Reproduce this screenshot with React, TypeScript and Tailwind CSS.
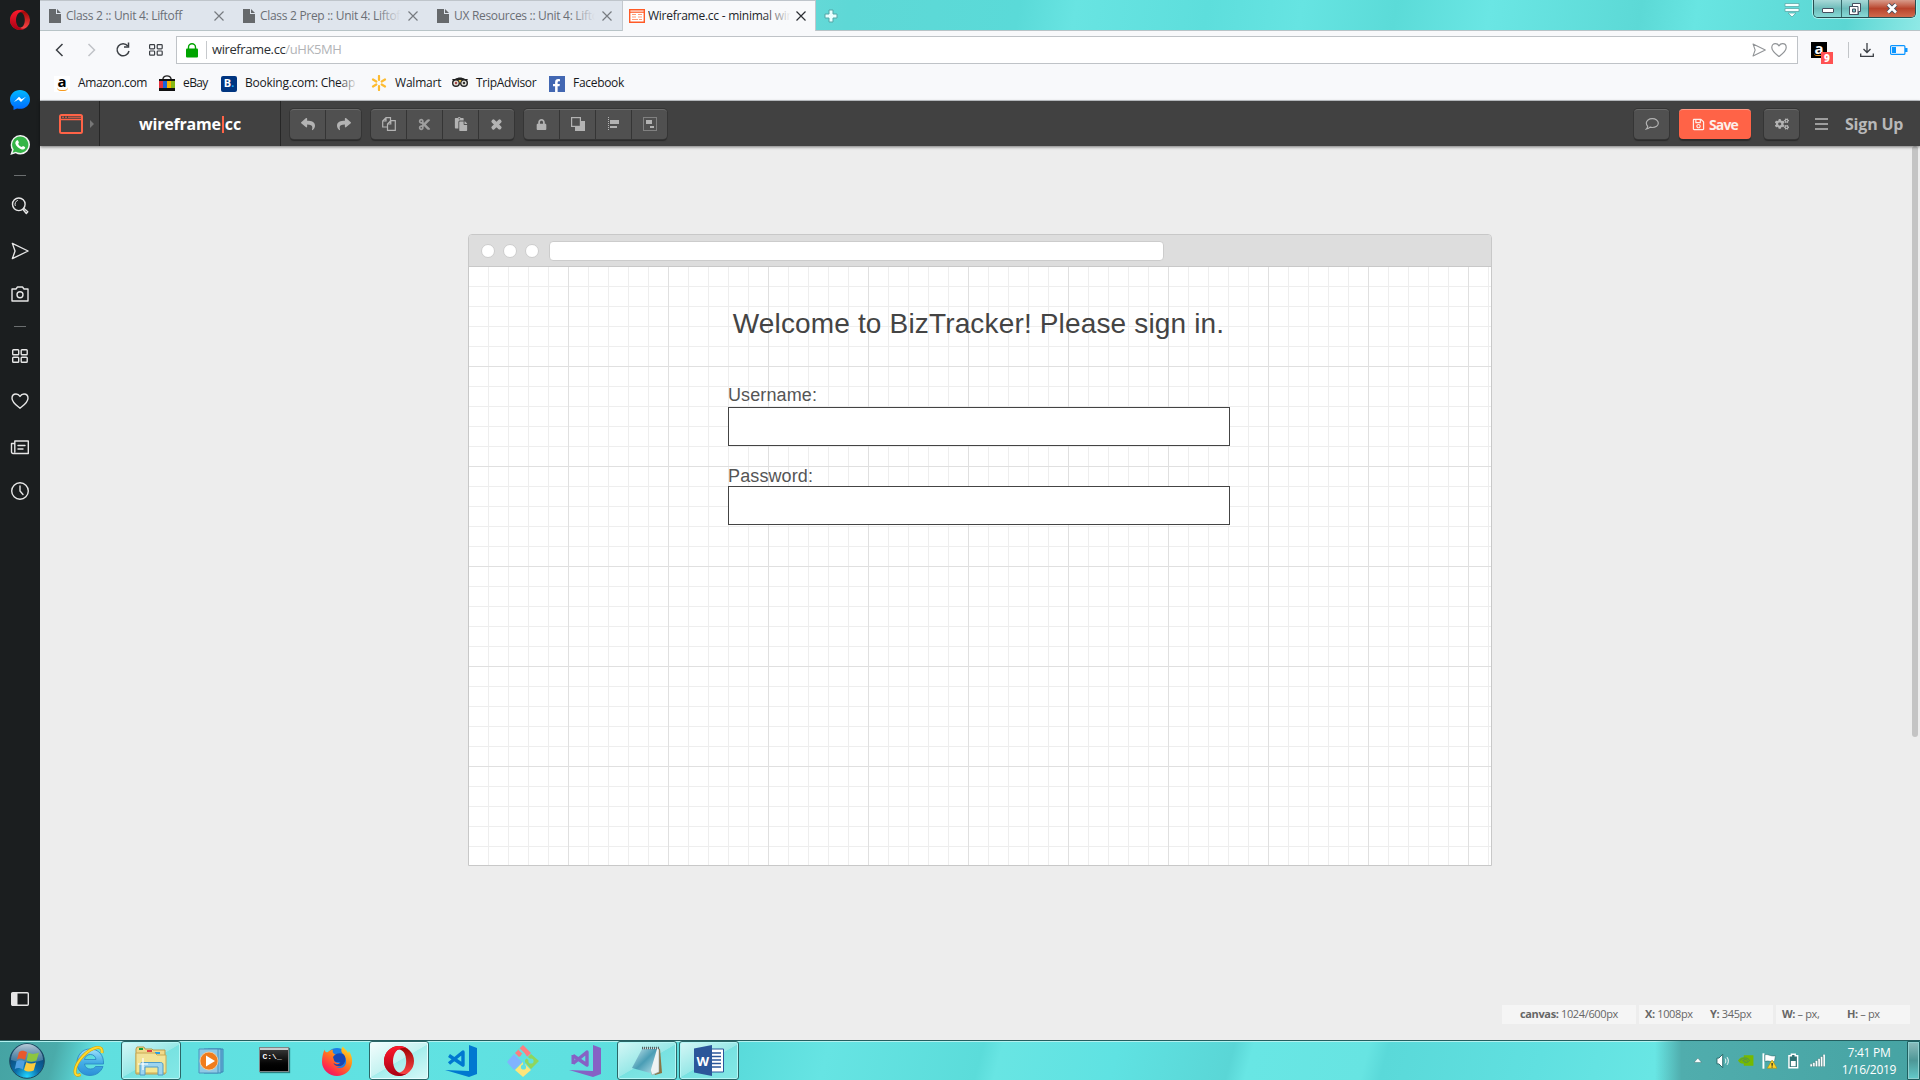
import React from 'react';
import { FaReply, FaShare, FaCut, FaPaste, FaTimes, FaLock, FaRegSave, FaCogs, FaFacebookF } from 'react-icons/fa';

type Kids = { children?: React.ReactNode };

/* ---------- shared line icons ---------- */

const Line = ({ children, s = 20, w = 1.4, c = '' }: Kids & { s?: number; w?: number; c?: string }) => (
  <svg width={s} height={s} viewBox="0 0 20 20" fill="none" stroke="currentColor" strokeWidth={w} strokeLinejoin="round" strokeLinecap="round" className={c}>
    {children}
  </svg>
);

const Heart = () => <path d="M10 17.200C7 14.800 2 11.500 2 7.200 2 4.600 3.800 3 6 3c1.900 0 3.200 1 4 2.400C10.800 4 12.100 3 14 3c2.200 0 4 1.600 4 4.200 0 4.300-5 7.600-8 10z" />;
const Plane = () => <path d="M1.500 1.500l17.500 8.500L1.500 18.500l3-8.500z" />;
const Tiles = () => (
  <>
    <rect x="2.700" y="3.700" width="6" height="5" rx="0.800" />
    <rect x="11.200" y="3.700" width="6" height="5" rx="0.800" />
    <rect x="2.700" y="11.200" width="6" height="5" rx="0.800" />
    <rect x="11.200" y="11.200" width="6" height="5" rx="0.800" />
  </>
);

const OperaMark = ({ size }: { size: number }) => (
  <svg width={size} height={size} viewBox="0 0 30 30">
    <defs>
      <linearGradient id="opA" x1="0" y1="0" x2="0" y2="1">
        <stop offset="0" stopColor="#ff1b2d" />
        <stop offset="1" stopColor="#a70014" />
      </linearGradient>
      <linearGradient id="opB" x1="0" y1="0" x2="0" y2="1">
        <stop offset="0" stopColor="#9c0000" />
        <stop offset="1" stopColor="#ff4b4b" />
      </linearGradient>
    </defs>
    <path fillRule="evenodd" fill="url(#opB)" d="M15 0a15 15 0 1 1 0 30A15 15 0 0 1 15 0zm0 3.500C11 3.500 8.500 8.500 8.500 15S11 26.500 15 26.500c4.200 0 7.200-5 7.200-11.500S19.200 3.500 15 3.500z" />
    <path fill="url(#opA)" d="M15 0a15 15 0 1 0 9.500 26.500c-5 3-10 1-12.500-2-4-5-4-14 0-19C14.500 2.500 20 .500 24.500 3.500A15 15 0 0 0 15 0z" />
  </svg>
);

/* ---------- Opera side bar ---------- */

const Sidebar = () => (
  <aside className="flex w-10 shrink-0 flex-col items-center bg-[#1b1e1f] pr-px text-[#e6e6e6] [&>div]:flex [&>div]:shrink-0 [&>div]:items-center [&>div]:justify-center">
    <div className="ml-px h-[39px]"><OperaMark size={20} /></div>
    <div className="ml-px mt-10 h-[41px]">
      <svg width="20" height="20" viewBox="0 0 20 20">
        <defs>
          <linearGradient id="msg" x1="0" y1="0" x2="0" y2="1"><stop offset="0" stopColor="#00b8ff" /><stop offset="1" stopColor="#0068ff" /></linearGradient>
        </defs>
        <path fill="url(#msg)" d="M10 0c5.600 0 10 4.200 10 9.400s-4.400 9.400-10 9.400c-1 0-2-.100-2.900-.400L3.500 20v-3.500C1.300 14.800 0 12.300 0 9.400 0 4.200 4.400 0 10 0z" />
        <path fill="#fff" d="M4 12l5-5.200 2.600 2.500L16 6.800l-5 5.300-2.500-2.600z" />
      </svg>
    </div>
    <div className="ml-px h-[50px]">
      <svg width="20" height="20" viewBox="0 0 20 20">
        <path fill="#f4f4f4" d="M10.200 0A9.700 9.700 0 0 1 20 9.800a9.700 9.700 0 0 1-9.800 9.700c-1.700 0-3.200-.400-4.500-1.200L.300 20l1.700-5.200a9.700 9.700 0 0 1-1.300-5A9.700 9.700 0 0 1 10.200 0z" />
        <path fill="#35b547" d="M10.200 1.500a8.200 8.200 0 1 1-4.300 15.200L2.600 17.700l1.100-3.200A8.200 8.200 0 0 1 10.200 1.500z" />
        <path fill="#fff" d="M7.200 5.300c.4-.1.800 0 1 .5l.7 1.600c.1.400-.8 1.200-.7 1.500.8 1.500 2 2.500 3.400 3.100.4.100 1.100-1.100 1.500-1l1.800.9c.4.200.2 1.200-.1 1.700-.6.800-1.900 1.200-3 .9-3-.8-5.400-3-6.400-5.700-.4-1.300.5-3.200 1.800-3.500z" />
      </svg>
    </div>
    <div className="h-[11px]"><i className="h-px w-3 bg-[#6b6e6f]" /></div>
    <div className="h-[50px]">
      <Line><circle cx="8.800" cy="8.300" r="6.300" /><path d="M5.200 9.500a3.800 3.800 0 0 1 2.200-5" strokeWidth="1" /><path d="M13 13.500l1-1 3.800 3.300-1.500 1.700z" /></Line>
    </div>
    <div className="h-[40px]"><Line s={18} w={1.5}><Plane /></Line></div>
    <div className="h-[46px]">
      <Line><path d="M2 5h4l1.500-2h5L14 5h4v12H2z" /><circle cx="10" cy="10.800" r="3" /></Line>
    </div>
    <div className="h-[18px]"><i className="h-px w-3 bg-[#6b6e6f]" /></div>
    <div className="h-[42px]"><Line><Tiles /></Line></div>
    <div className="h-[48px]"><Line><Heart /></Line></div>
    <div className="h-[44px]">
      <Line><path d="M4.800 4h13.500v12.500H3a1.500 1.500 0 0 1-1.500-1.500V6.500h3.300zM4.800 6.500V15M8 8.500h7M8 12h5" /></Line>
    </div>
    <div className="h-[44px]"><Line><circle cx="10" cy="10" r="8.300" /><path d="M10 5v5l3 3.500" /></Line></div>
    <div className="mt-auto h-[82px]">
      <svg width="20" height="16" viewBox="0 0 20 16"><rect x="1.700" y="1.700" width="16.600" height="12.600" rx="1" fill="none" stroke="#e6e6e6" strokeWidth="1.400" /><path fill="#e6e6e6" d="M2 2h5.500v12H2z" /></svg>
    </div>
  </aside>
);

/* ---------- tab strip ---------- */

const PageIcon = () => (
  <svg width="12" height="14" viewBox="0 0 12 14" className="shrink-0"><path fill="#66696c" d="M0 0h7v5h5v9H0z" /><path fill="#66696c" d="M8 0l4 4H8z" /></svg>
);

const CloseX = ({ c }: { c: string }) => (
  <svg width="10" height="10" viewBox="0 0 10 10" className={c}><path d="M.500 .500l9 9m0-9l-9 9" stroke="currentColor" strokeWidth="1.200" /></svg>
);

const Tab = ({ title, fade, last }: { title: string; fade?: boolean; last?: boolean }) => (
  <div className="flex h-full w-[194px] items-center bg-[#dfe5ed] pl-[9px]">
    <PageIcon />
    <div className="relative ml-[5px] w-[141px] overflow-hidden whitespace-nowrap text-[12px] tracking-[-0.3px] text-[#6b6f75]">
      {title}
      {fade && <i className="absolute inset-y-0 right-0 w-6 bg-linear-to-r from-[#dfe5ed]/0 to-[#dfe5ed]" />}
    </div>
    <span className="ml-[7px]"><CloseX c="text-[#777b80]" /></span>
    {!last && <i className="ml-auto mr-[-1px] h-4 w-px bg-[#b4b9bf]" />}
  </div>
);

const WindowButtons = () => (
  <div className="mr-[4px] flex h-[18px] self-start overflow-hidden rounded-b-[5px] border border-t-0 border-[#274e50] shadow-[0_0_0_1px_#a9f0ee]">
    <div className="flex w-[28px] items-center justify-center border-r border-[#35696a] bg-linear-to-b from-[#a8d9d8] via-[#6dbcba] to-[#87d9d6]">
      <i className="mt-1 h-[5px] w-3 rounded-[1px] border border-[#454f5f] bg-white" />
    </div>
    <div className="flex w-[27px] items-center justify-center border-r border-[#35696a] bg-linear-to-b from-[#a8d9d8] via-[#6dbcba] to-[#87d9d6]">
      <svg width="12" height="12" viewBox="0 0 12 12"><path d="M3.500 .500h8v8h-2v3h-9v-8h3z" fill="#fff" stroke="#454f5f" /><path d="M.500 3.500h8.500v8H.500z" fill="#fff" stroke="#454f5f" /><path d="M3.500 6h3v3h-3z" fill="#7cc" stroke="#454f5f" /></svg>
    </div>
    <div className="flex w-[46px] items-center justify-center bg-linear-to-b from-[#d89b8b] via-[#b8432c] to-[#d06a4c]">
      <svg width="12" height="11" viewBox="0 0 12 11"><path d="M2 1.500L10 9.500M10 1.500L2 9.500" stroke="#454f5f" strokeWidth="4.400" /><path d="M2 1.500L10 9.500M10 1.500L2 9.500" stroke="#fff" strokeWidth="2.600" /></svg>
    </div>
  </div>
);

const TabStrip = () => (
  <div className="flex h-[31px] items-stretch border-b border-[#b8c4c7] bg-[linear-gradient(100deg,#dfe5ed_0%,#5ed8d6_43%,#5adad8_52%,#68e4e2_55%,#5ddedc_62%,#66e4e2_67%,#5bdbd8_72%,#6ae6e4_77%,#5cd9d6_85%,#68e5e2_88%,#5bd6d3_96%,#8fe9e6_100%)]">
    <div className="flex h-[30px] border-t border-[#bfc5cb]">
      <Tab title="Class 2 :: Unit 4: Liftoff" />
      <Tab title="Class 2 Prep :: Unit 4: Liftoff" fade />
      <Tab title="UX Resources :: Unit 4: Liftoff" fade last />
      <div className="z-10 flex h-[30px] w-[194px] items-center border-x border-[#c3c8cd] bg-[#f8f9fb] pb-px pl-[6px]">
        <svg width="16" height="14" viewBox="0 0 16 14" className="shrink-0"><path d="M.700 .700h14.600v12.600H.700z" fill="#fff" stroke="#ff5a26" strokeWidth="1.400" /><path d="M1 3.200h14" stroke="#ff5a26" strokeWidth="1.200" /><path d="M3 5.500h4M9 5.500h4M3 8h4M9 8h4M3 10.500h6M10 10.500h3" stroke="#ff9c78" /></svg>
        <div className="relative ml-[3px] w-[143px] overflow-hidden whitespace-nowrap text-[12px] tracking-[-0.25px] text-[#22252a]">
          Wireframe.cc - minimal wireframing
          <i className="absolute inset-y-0 right-0 w-7 bg-linear-to-r from-[#f8f9fb]/0 to-[#f8f9fb]" />
        </div>
        <span className="ml-[5px]"><CloseX c="text-[#2b2e33]" /></span>
      </div>
    </div>
    <svg width="14" height="14" viewBox="0 0 14 14" className="ml-[8px] mt-[9px]"><path d="M5 1h4v4h4v4H9v4H5V9H1V5h4z" fill="#e8ffff" stroke="#54a5a6" /></svg>
    <div className="ml-auto flex">
      <svg width="16" height="15" viewBox="0 0 16 15" className="mr-[13px] mt-[3px]"><path d="M1 .500h14v3H1zM1 5.500h14v3H1zM4 10h8l-4 4z" fill="#f2ffff" stroke="#5ba9a9" strokeWidth=".8" /></svg>
      <WindowButtons />
    </div>
  </div>
);

/* ---------- address bar ---------- */

const AddressBar = () => (
  <div className="flex h-[38px] items-center bg-[#f8f9fb] text-[#3b3f44]">
    <div className="flex w-[136px] items-center">
      <svg width="9" height="14" viewBox="0 0 9 14" className="ml-[15px]"><path d="M7.500 1L1.500 7l6 6" fill="none" stroke="currentColor" strokeWidth="1.500" /></svg>
      <svg width="9" height="14" viewBox="0 0 9 14" className="ml-[23px]"><path d="M1.500 1l6 6-6 6" fill="none" stroke="#c0c3c7" strokeWidth="1.500" /></svg>
      <svg width="16" height="16" viewBox="0 0 16 16" className="ml-[19px]"><path d="M12.800 4A6 6 0 1 0 14 9" fill="none" stroke="currentColor" strokeWidth="1.500" /><path d="M13.500 .500v4.500H9" fill="none" stroke="currentColor" strokeWidth="1.500" /></svg>
      <svg width="14" height="12" viewBox="0 0 14 12" className="ml-[18px]" fill="none" stroke="currentColor" strokeWidth="1.200"><rect x=".6" y=".6" width="5" height="4.200" rx=".8" /><rect x="8.200" y=".6" width="5" height="4.200" rx=".8" /><rect x=".6" y="7" width="5" height="4.200" rx=".8" /><rect x="8.200" y="7" width="5" height="4.200" rx=".8" /></svg>
    </div>
    <div className="flex h-7 w-[1622px] items-center border border-[#bfc3c7] bg-white">
      <svg width="12" height="15" viewBox="0 0 12 15" className="ml-[9px]"><path d="M2.500 7V4.200a3.500 3.500 0 0 1 7 0V7" fill="none" stroke="#00a400" strokeWidth="1.400" /><rect x="0" y="5.500" width="12" height="9" rx="1" fill="#00a400" /></svg>
      <i className="ml-[8px] h-[18px] w-px bg-[#c6c9cc]" />
      <span className="ml-[5px] text-[13px] tracking-[-0.4px] text-[#2c2f33]">wireframe.cc<span className="text-[#b2b4b7]">/uHK5MH</span></span>
      <span className="ml-auto flex items-center gap-[4px] pr-[9px] text-[#909396]">
        <Line s={14} w={1.5}><Plane /></Line>
        <Line s={18} w={1.3}><Heart /></Line>
      </span>
    </div>
    <div className="relative ml-[13px] flex size-4 items-center justify-center bg-black text-[15px] font-bold leading-none text-white">
      <span className="-mt-1">a</span>
      <i className="absolute bottom-[2px] left-[3px] h-[3px] w-[9px] rounded-b-full border-b border-[#f79a1c]" />
      <b className="absolute left-[10px] top-[10px] flex size-3 items-center justify-center bg-[#ff5252] text-[10px]">9</b>
    </div>
    <i className="ml-[21px] h-4 w-px bg-[#c2c5c8]" />
    <svg width="14" height="14" viewBox="0 0 14 14" className="ml-[11px]" fill="none" stroke="currentColor" strokeWidth="1.300"><path d="M7 0v9M3.500 6L7 9.500 10.500 6M.700 10.500v2.800h12.600v-2.800" /></svg>
    <svg width="18" height="10" viewBox="0 0 18 10" className="ml-[16px]"><rect x=".6" y=".6" width="14.300" height="8.800" rx="1" fill="none" stroke="#0a95ff" strokeWidth="1.200" /><path d="M2 2h4v6H2zM15 3h2.500v4H15z" fill="#0a95ff" /></svg>
  </div>
);

const Bookmarks = () => (
  <div className="flex h-[32px] items-center border-b border-[#c5c9cd] bg-[#f8f9fb] pb-[3px] text-[12px] text-[#17191c]">
    <span className="relative ml-[14px] mt-px flex size-4 items-center justify-center bg-white text-[15px] font-bold leading-none text-black">
      <span className="-mt-[5px]">a</span>
      <i className="absolute bottom-[1px] left-[3px] h-[4px] w-[11px] rounded-b-full border-b-[1.500px] border-[#f79a1c]" />
    </span>
    <span className="ml-2 w-[69px] whitespace-nowrap tracking-[-0.38px]">Amazon.com</span>
    <svg width="16" height="16" viewBox="0 0 16 16" className="ml-[12px]"><path d="M4 6V3.500C5 0 11 0 12 3.500V6" fill="none" stroke="#222" strokeWidth="1.300" /><path fill="#111" d="M0 4h16v12H0z" /><path fill="#e5323d" d="M0 6h4v7H0z" /><path fill="#1a63d8" d="M4 6h4v7H4z" /><path fill="#f5b400" d="M8 6h4v7H8z" /><path fill="#86b817" d="M12 6h4v7h-4z" /></svg>
    <span className="ml-2 w-[25px] whitespace-nowrap tracking-[-0.6px]">eBay</span>
    <span className="ml-[13px] mt-px flex size-4 items-center justify-center rounded-[2px] bg-[#003580] text-[11px] font-bold text-white">B<span className="text-[#1fb0f5]">.</span></span>
    <span className="relative ml-2 w-[113px] overflow-hidden whitespace-nowrap tracking-[-0.25px]">Booking.com: Cheap H<i className="absolute inset-y-0 right-0 w-4 bg-linear-to-r from-[#f8f9fb]/20 to-[#f8f9fb]" /></span>
    <svg width="16" height="16" viewBox="0 0 16 16" className="ml-[13px]" stroke="#fdbb30" strokeWidth="2.200" strokeLinecap="round"><path d="M8 1v4M8 11v4M2 4.500l3.300 2M10.700 9.500l3.300 2M2 11.500l3.300-2M10.700 6.500l3.300-2" /></svg>
    <span className="ml-2 w-[45px] whitespace-nowrap tracking-[-0.2px]">Walmart</span>
    <svg width="16" height="12" viewBox="0 0 16 12" className="ml-[12px]"><path d="M0 2h3c3-2 7-2 10 0h3l-2 3H2z" fill="#222" /><circle cx="4" cy="6" r="4" fill="#222" /><circle cx="12" cy="6" r="4" fill="#222" /><circle cx="4" cy="6" r="2.600" fill="#e3e2da" /><circle cx="12" cy="6" r="2.600" fill="#e3e2da" /><circle cx="4" cy="6" r="1.200" fill="#a44" /><circle cx="12" cy="6" r="1.200" fill="#333" /><path d="M6.500 3h3L8 6z" fill="#f0c24b" /></svg>
    <span className="ml-2 w-[61px] whitespace-nowrap tracking-[-0.3px]">TripAdvisor</span>
    <span className="ml-[12px] mt-px flex size-4 items-end justify-end overflow-hidden bg-[#4267b2] pr-[2px] text-white"><FaFacebookF size={13} /></span>
    <span className="ml-2 whitespace-nowrap tracking-[-0.3px]">Facebook</span>
  </div>
);

/* ---------- wireframe.cc tool bar ---------- */

const Group = ({ children }: Kids) => (
  <div className="flex h-[30px] divide-x divide-[#353535] rounded-[4px] border-t border-[#6a6a6a] bg-[#505050] text-[#b3b3b3] shadow-[0_0_0_1px_#353535,0_2px_1px_#2b2b2b] [&>span]:flex [&>span]:w-9 [&>span]:items-center [&>span]:justify-center [&>span:last-child]:w-[35px]">
    {children}
  </div>
);

const Toolbar = () => (
  <div className="z-10 flex h-[45px] items-center bg-[#414141] shadow-[0_1px_3px_rgba(0,0,0,0.5)]">
    <div className="flex h-full w-[60px] items-center border-r border-[#262626] pl-[19px]">
      <svg width="24" height="20" viewBox="0 0 24 20" fill="none" stroke="#ff6347" strokeWidth="2"><rect x="1" y="1" width="22" height="18" rx="1.500" /><path d="M1 5.500h22" strokeWidth="1.500" /><path d="M3 3.200h2M6 3.200h2M9 3.200h14" strokeWidth="1" /></svg>
      <svg width="5" height="8" viewBox="0 0 5 8" className="ml-[7px]"><path d="M0 0l4 4-4 4z" fill="#777" /></svg>
    </div>
    <div className="flex h-full w-[181px] items-center justify-center border-r border-[#262626] text-[16px] font-bold tracking-[-0.2px] text-white">
      wireframe<span className="mx-[1px] mt-[2px] h-[17px] w-[2px] bg-[#ff6347]" />cc
    </div>
    <div className="ml-[9px] flex gap-[10px]">
      <Group>
        <span><FaReply size={14} /></span>
        <span><FaShare size={14} /></span>
      </Group>
      <Group>
        <span>
          <svg width="14" height="14" viewBox="0 0 14 14" fill="#505050" stroke="currentColor" strokeWidth="1.200"><path d="M4 .700h4.500V10H.700V4zM4 .700V4H.700" /><path d="M8.800 3.700h4.500v9.600H5.500V7zM8.800 3.700V7H5.500" /></svg>
        </span>
        <span><FaCut size={13} className="opacity-80" /></span>
        <span><FaPaste size={14} /></span>
        <span><FaTimes size={13} strokeWidth="50" stroke="currentColor" /></span>
      </Group>
      <Group>
        <span><FaLock size={11} /></span>
        <span>
          <svg width="14" height="14" viewBox="0 0 14 14"><path fill="currentColor" d="M4 10h6V4h4v10H4z" /><rect x=".6" y=".6" width="8.800" height="8.800" fill="#505050" stroke="currentColor" strokeWidth="1.200" /></svg>
        </span>
        <span>
          <svg width="12" height="14" viewBox="0 0 12 14"><path d="M.500 0v14" stroke="currentColor" strokeDasharray="1 1" /><path fill="currentColor" d="M2 3h9v4H2zM2 9h7v2H2z" /></svg>
        </span>
        <span>
          <svg width="14" height="14" viewBox="0 0 14 14"><rect x=".5" y=".5" width="13" height="13" fill="none" stroke="currentColor" strokeDasharray="1 1" /><path fill="currentColor" d="M3 3h6v4H3zM7 9h4v2H7z" /></svg>
        </span>
      </Group>
    </div>
    <div className="ml-auto flex items-center">
      <Group>
        <span>
          <svg width="14" height="12" viewBox="0 0 14 12" fill="none" stroke="currentColor" strokeWidth="1.200"><path d="M7.300.7c3.400 0 6 1.900 6 4.400s-2.600 4.400-6 4.400c-.8 0-1.500-.1-2.200-.3-.9.9-2 1.500-3.600 1.800.7-.8 1.100-1.600 1.200-2.800C1.800 7.400 1.300 6.300 1.300 5.100c0-2.500 2.600-4.400 6-4.400z" /></svg>
        </span>
      </Group>
      <div className="ml-[10px] flex h-[30px] w-[72px] items-center justify-center gap-[4px] rounded-[4px] border-t border-[#ff9a87] bg-[#ff6347] text-[14px] font-bold tracking-[-0.8px] text-[#fdeeea] shadow-[0_2px_1px_#2b2b2b]">
        <FaRegSave size={13} />Save
      </div>
      <div className="ml-[13px]"><Group><span><FaCogs size={14} /></span></Group></div>
      <div className="ml-4 flex w-[13px] flex-col gap-[2px]"><i className="h-[2px] bg-[#9d9d9d]" /><i className="mt-px h-[2px] bg-[#9d9d9d]" /><i className="mt-px h-[2px] bg-[#9d9d9d]" /></div>
      <span className="ml-[17px] w-[75px] whitespace-nowrap text-[16px] font-bold tracking-[-0.2px] text-[#b8b8b8]">Sign Up</span>
    </div>
  </div>
);

/* ---------- drawing canvas ---------- */

const Field = ({ label, drop }: { label: string; drop?: boolean }) => (
  <label className="flex flex-col">
    <span className={drop ? "flex h-[20px] items-center pt-[3px] font-['Liberation_Sans',sans-serif] text-[18px] leading-none tracking-[0.12px] text-[#555]" : "flex h-[20px] items-center font-['Liberation_Sans',sans-serif] text-[18px] leading-none tracking-[0.12px] text-[#555]"}>{label}</span>
    <span className="mt-[2px] h-[39px] w-[502px] border border-[#444] bg-white" />
  </label>
);

const Canvas = () => (
  <div className="flex h-[632px] w-[1024px] flex-col overflow-hidden rounded-t-[4px] border border-[#c8c8c8]">
    <div className="flex h-[32px] shrink-0 items-center border-b border-[#c8c8c8] bg-[#ddd] pl-[12px]">
      <div className="flex gap-[8px]">
        <i className="size-[14px] rounded-full border border-[#ccc] bg-white" />
        <i className="size-[14px] rounded-full border border-[#ccc] bg-white" />
        <i className="size-[14px] rounded-full border border-[#ccc] bg-white" />
      </div>
      <i className="ml-[10px] h-[20px] w-[615px] rounded-[4px] border border-[#ccc] bg-white" />
    </div>
    <div className="flex grow flex-col items-center bg-white bg-[linear-gradient(to_right,transparent_99px,#e0e0e0_99px),linear-gradient(to_bottom,transparent_99px,#e0e0e0_99px),linear-gradient(to_right,transparent_19px,#eee_19px),linear-gradient(to_bottom,transparent_19px,#eee_19px)] bg-[size:100px_100px,100px_100px,20px_20px,20px_20px] pt-[41px]">
      <h1 className="ml-[-3px] h-[32px] whitespace-nowrap font-['Liberation_Sans',sans-serif] text-[28px] leading-[32px] tracking-[0.16px] text-[#444]">Welcome to BizTracker! Please sign in.</h1>
      <div className="ml-[-2px] mt-[45px] flex flex-col gap-[18px]">
        <Field label="Username:" />
        <Field label="Password:" drop />
      </div>
    </div>
  </div>
);

const Status = () => (
  <div className="flex gap-[3px] text-[11px] tracking-[-0.36px] text-[#666] [&>div]:flex [&>div]:h-[19px] [&>div]:w-[134px] [&>div]:items-center [&>div]:whitespace-pre [&>div]:bg-[#f5f5f5]">
    <div className="pl-[18px]"><b>canvas:</b> 1024/600px</div>
    <div className="pl-[6px]"><span className="w-[65px]"><b>X:</b> 1008px</span><span><b>Y:</b> 345px</span></div>
    <div className="pl-[6px]"><span className="w-[65px]"><b>W:</b> – px,</span><span><b>H:</b> – px</span></div>
  </div>
);

/* ---------- Windows task bar ---------- */

const Slot = ({ children, open, bright }: Kids & { open?: boolean; bright?: boolean }) => (
  <div className="flex w-[62px] shrink-0 items-center justify-center">
    {open ? (
      <div className={bright
        ? 'flex h-[39px] w-[60px] items-center justify-center rounded-[3px] border border-[#2b6667] bg-[linear-gradient(150deg,#f4fdfd,#c4f3f1_50%,#a5eeec_51%,#d8f9f8)] shadow-[inset_0_0_0_1px_#e8ffff]'
        : 'flex h-[39px] w-[60px] items-center justify-center rounded-[3px] border border-[#2b6667] bg-[linear-gradient(150deg,#d5f7f6,#98e8e7_50%,#78e2e1_51%,#84e8e6)] shadow-[inset_0_0_0_1px_#b5f7f6]'}>
        {children}
      </div>
    ) : children}
  </div>
);

const StartOrb = () => (
  <svg width="36" height="36" viewBox="0 0 36 36">
    <defs>
      <radialGradient id="orb" cx=".5" cy=".95" r=".9"><stop offset="0" stopColor="#22d6ff" /><stop offset=".4" stopColor="#0b6ca8" /><stop offset="1" stopColor="#0b3a63" /></radialGradient>
      <linearGradient id="orbTop" x1="0" y1="0" x2="0" y2="1"><stop offset="0" stopColor="#d5e6ee" stopOpacity=".85" /><stop offset="1" stopColor="#8fb4c8" stopOpacity=".35" /></linearGradient>
    </defs>
    <circle cx="18" cy="18" r="17.300" fill="url(#orb)" stroke="#1d4960" />
    <path d="M2 17a16 16 0 0 1 32 0c-9 3-22 3-32 0z" fill="url(#orbTop)" />
    <path d="M10 9c3-2 5-1.500 8 .2l-2 7.800c-3-1.800-5.500-2-8-.5z" fill="#e8582c" />
    <path d="M19.500 9.800c3 1.600 6 1.600 10.500-.3l-2.500 8c-3.500 1.500-6.500 1.500-10 0z" fill="#8cc63f" />
    <path d="M7.500 18.200c3-1.600 5.500-1.300 8.300.3l-2 8c-3-2-5.500-2-8-.5z" fill="#4e9fe0" />
    <path d="M17.200 19.200c3 1.600 6.500 1.600 9.800.2l-2.300 8c-3.500 1.600-6.500 1.400-9.700-.5z" fill="#fccb3d" />
  </svg>
);

const IeIcon = () => (
  <svg width="32" height="32" viewBox="0 0 32 32">
    <defs><linearGradient id="ie" x1="0" y1="0" x2="0" y2="1"><stop offset="0" stopColor="#9fe2fb" /><stop offset=".5" stopColor="#45aee6" /><stop offset="1" stopColor="#2b8fd8" /></linearGradient></defs>
    <path fillRule="evenodd" d="M30.500 19H11.500c.5 3.500 3 5 6 5 2.500 0 4-.8 5-2.500h7.500C28 27 23 30.500 17 30.500c-8 0-13-5.500-13-13S9.500 4 17 4c8.500 0 14 6 13.500 15zM11.500 14.500h11.500c-.3-3-2.500-5-5.700-5s-5.300 2-5.800 5z" fill="url(#ie)" stroke="#2783c4" strokeWidth=".8" />
    <path d="M29 8c.5-4-1-6-5-5.500C15 4 3 16 2 26c-.3 4 2 5 5.500 3.500" fill="none" stroke="#d7a400" strokeWidth="3" />
    <path d="M29 8c.5-4-1-6-5-5.500C15 4 3 16 2 26c-.3 4 2 5 5.500 3.500" fill="none" stroke="#ffd92e" strokeWidth="1.900" />
  </svg>
);

const FolderIcon = () => (
  <svg width="32" height="30" viewBox="0 0 32 30" className="mt-px">
    <defs><linearGradient id="fold" x1="0" y1="0" x2="0" y2="1"><stop offset="0" stopColor="#f0e19a" /><stop offset="1" stopColor="#f7e88f" /></linearGradient></defs>
    <path d="M1 3l1-2h7l1 2h7l1 1h12v24H1z" fill="#f0d98a" stroke="#b99b4a" />
    <path d="M4 2h4v2H4z" fill="#14a038" /><path d="M12 4h5v2h-5z" fill="#d44" /><path d="M20 6h5v2h-5z" fill="#28a0e8" />
    <path d="M1 7h19l2 2h9v18H1z" fill="url(#fold)" stroke="#c9ab55" />
    <path d="M5 29V19c0-2 1-2.500 2.500-2.500h18c1.500 0 2.500.5 2.500 2.500v10h-5v-8H10v8z" fill="#9dd4ef" stroke="#4f9cc8" />
    <path d="M8 12v12M3 18h10" stroke="#fff" strokeWidth="1.200" />
  </svg>
);

const MediaIcon = () => (
  <svg width="30" height="26" viewBox="0 0 30 26" className="mt-px">
    <path d="M10 1h15v23H10z" fill="#6db5dc" stroke="#3a86b5" /><path d="M6 1h17v24H6z" fill="#82c2e4" stroke="#3a86b5" /><path d="M1 1h19v24H1z" fill="#8ec9e6" stroke="#4a93bd" />
    <circle cx="11" cy="13" r="9" fill="#f07c1c" stroke="#fbd0a0" strokeWidth=".8" /><path d="M8 7.500l9 5.500-9 5.500z" fill="#fff" />
  </svg>
);

const CmdIcon = () => (
  <div className="mr-[3px] mt-[-2px] flex h-[25px] w-[30px] flex-col border border-[#7d8587] bg-linear-to-b from-[#3d3d3d] to-black shadow-[1px_1px_1px_#2a8080]">
    <i className="h-[2px] shrink-0 bg-[#c8cccd]" />
    <span className="mt-[2px] whitespace-nowrap pl-[3px] font-['Liberation_Mono',monospace] text-[8px] font-bold leading-[10px] text-white">C:\_</span>
  </div>
);

const FirefoxIcon = () => (
  <svg width="32" height="32" viewBox="0 0 32 32">
    <defs>
      <linearGradient id="ffx" x1=".9" y1="0" x2=".2" y2="1"><stop offset="0" stopColor="#ffe226" /><stop offset=".45" stopColor="#ff7d1c" /><stop offset=".8" stopColor="#ff2d4a" /><stop offset="1" stopColor="#e3146f" /></linearGradient>
    </defs>
    <circle cx="16" cy="14" r="11" fill="#1a7fe8" />
    <path d="M3.500 4.500C4 7 5 7.500 7 7c1.500-1.500 3-2 5-2.500-1 2 0 4 2 5l3 .5c-.5 2-3 2-3.500 3.500-1 2 1 5 5 4.500 3-.5 3-1.500 5-.5-2 4-5 5-8.500 4.500 6 3 11-1 10-7-.5-3-2-5-3-6-2-2-2.500-5 0-7.500C23 4 26 5 27 8l1-2c2.500 4 3.500 8 3 12-1 8-7.500 13-15 13S1 25 1 17C1 12 2 8 3.500 4.500z" fill="url(#ffx)" />
    <path d="M12 12c2-3 6-5 10-3 4 3 3 10-2 12-4 1-7-1-7.500-3 3 2 5 1.500 7-.5-3-.5-6 0-6.500-2.500z" fill="#1747b5" />
  </svg>
);

const StudioIcon = ({ color }: { color: string }) => (
  <svg width="32" height="32" viewBox="0 0 32 32"><path fill={color} d="M24 0l8 3v26l-8 3L0 25l24 1z" /><path fill="none" stroke={color} strokeWidth="3.400" strokeLinejoin="round" d="M4 10.500L18 20V7L4 18.500" />{color === '#8661c5' && <path d="M4 10v9" stroke={color} strokeWidth="3" />}</svg>
);

const GitIcon = () => (
  <svg width="34" height="34" viewBox="0 0 34 34">
    <path fill="#fc7e80" d="M17 1l8 8-4 4-4-3-4 3-4-4z" /><path fill="#80b3ff" d="M8 10l8 8-8 8-7-8z" /><path fill="#8fd65c" d="M25 10l8 7-8 8-7-8z" /><path fill="#fde57a" d="M17 18l8 8-8 7-8-7z" />
    <path d="M13 5l5 5v12M18 11l7 6" stroke="#60e0e0" strokeWidth="2" fill="none" /><circle cx="17.500" cy="12" r="2.600" fill="#60e0e0" /><circle cx="25" cy="17" r="2.600" fill="#60e0e0" /><circle cx="17.500" cy="23" r="2.600" fill="#60e0e0" />
  </svg>
);

const NotepadIcon = () => (
  <svg width="32" height="30" viewBox="0 0 32 30">
    <defs><linearGradient id="note" x1="0" y1="0" x2="1" y2="1"><stop offset="0" stopColor="#c5e6ec" /><stop offset=".5" stopColor="#4a9db5" /><stop offset="1" stopColor="#b9e3ec" /></linearGradient></defs>
    <path d="M11 3h18l2 24-7 2z" fill="#8b7442" /><path d="M12 2h16v24l-7 3z" fill="#eef3f3" stroke="#9aa" strokeWidth=".6" /><path d="M11 3h15l-7 24L1 22z" fill="url(#note)" /><path d="M11 2h17" stroke="#566" strokeWidth="2.500" strokeDasharray="1 1" />
  </svg>
);

const WordIcon = () => (
  <svg width="31" height="31" viewBox="0 0 31 31">
    <path d="M16 4h13.500v23H16z" fill="#fff" stroke="#2b579a" /><path d="M18 8h9M18 11.500h9M18 15h9M18 18.500h9M18 22h9" stroke="#2b579a" strokeWidth="1.400" /><path d="M0 3.500L18 0v31L0 27.500z" fill="#2b579a" />
    <text x="8.800" y="20.500" textAnchor="middle" fontFamily="Open Sans, sans-serif" fontWeight="700" fontSize="13" fill="#fff">W</text>
  </svg>
);

const Tray = () => (
  <div className="ml-auto flex w-[265px] items-center bg-linear-to-r from-[#50adad]/0 via-[#50adad] via-10% to-[#46a3a3]">
    <div className="flex w-[170px] items-center pl-[39px]">
      <svg width="8" height="5" viewBox="0 0 8 5"><path d="M4 0l4 4.500H0z" fill="#fff" stroke="#356f70" strokeWidth=".5" /></svg>
      <svg width="14" height="16" viewBox="0 0 14 16" className="ml-[14px]"><path d="M1 5h2l4-4v14l-4-4H1z" fill="#fff" stroke="#286869" /><path d="M9.500 5.500c1 1.500 1 3.500 0 5M11.500 4c2 2.500 1.500 6 0 8" stroke="#fff" fill="none" /></svg>
      <svg width="16" height="11" viewBox="0 0 16 11" className="ml-[9px]"><path d="M6 0h10v11H6zM0 5.500C2 2.500 4 2 6 2v7C3 9 1 7.500 0 5.500z" fill="#76b900" /><path d="M2 5.500C5 2 10 2 12 5.500 10 8 7 8 5 5.500c2-1.500 4-1 5 0" fill="none" stroke="#4b8a60" /></svg>
      <svg width="16" height="16" viewBox="0 0 16 16" className="ml-[8px]"><path d="M1.500 0v16" stroke="#fff" strokeWidth="2" /><path d="M3 1.500c4-1 5 2 11 1l-1 6c-4 1-6-1.500-10 0z" fill="#fff" stroke="#2e6e6e" strokeWidth=".6" /><path d="M10.500 7l5 8.500h-10z" fill="#ffd42a" stroke="#b38b00" strokeWidth=".6" /><path d="M10.500 10v3M10.500 13.700v1" stroke="#222" strokeWidth="1.300" /></svg>
      <svg width="11" height="16" viewBox="0 0 11 16" className="ml-[11px]"><path d="M3.500 1h4v1.500H10V15H1V2.500h2.500z" fill="#2e7374" stroke="#fff" strokeWidth="1.500" /><path d="M3 8h5v5.500H3z" fill="#fff" /></svg>
      <svg width="16" height="13" viewBox="0 0 16 13" className="ml-[11px]" fill="#fff" stroke="#2e7374" strokeWidth=".5"><path d="M0 10h2.700v3H0zM2.700 8.500h2.700V13H2.700zM5.400 6.500h2.700V13H5.400zM8.100 4.500h2.700V13H8.100zM10.800 2.300h2.600V13h-2.600zM13.400 0H16v13h-2.600z" /></svg>
    </div>
    <div className="ml-[6px] flex w-[76px] flex-col items-center text-[12px] leading-[17px] tracking-[-0.28px] text-white">
      <span>7:41 PM</span>
      <span>1/16/2019</span>
    </div>
    <i className="h-full w-[13px] rounded-[1px] border border-[#1f5f60] bg-linear-to-b from-[#8dbdbd] via-[#4d9797] to-[#63cccb] shadow-[inset_0_0_0_1px_#8fd0cf]" />
  </div>
);

const Taskbar = () => (
  <footer className="flex h-10 border-t border-[#245f60] bg-[linear-gradient(105deg,#45a3a3_0%,#4aabaa_3%,#60dfdf_5%,#60e2e2_20%,#5fe0e0_30%,#58dada_38%,#66e4e3_43%,#5bdcda_51%,#68e5e3_52%,#5fe2e2_58%,#5ad6d6_64%,#68e6e4_65%,#67e4e2_71%,#5ad9d9_72%,#60e0e0_80%,#68e6e4_86%,#60dede_100%)] shadow-[inset_0_1px_0_#b2f1ef]">
    <div className="flex w-[58px] items-center justify-center pr-[4px]"><StartOrb /></div>
    <Slot><IeIcon /></Slot>
    <Slot open><FolderIcon /></Slot>
    <Slot><MediaIcon /></Slot>
    <Slot><CmdIcon /></Slot>
    <Slot><FirefoxIcon /></Slot>
    <Slot open bright><OperaMark size={30} /></Slot>
    <Slot><StudioIcon color="#0078d0" /></Slot>
    <Slot><GitIcon /></Slot>
    <Slot><StudioIcon color="#8661c5" /></Slot>
    <Slot open><NotepadIcon /></Slot>
    <Slot open><WordIcon /></Slot>
    <Tray />
  </footer>
);

export default function App() {
  return (
    <div className="flex h-[1080px] w-[1920px] flex-col overflow-hidden bg-[#ededed] font-['Open_Sans',sans-serif]">
      <div className="flex h-[1040px]">
        <Sidebar />
        <main className="flex w-[1880px] flex-col">
          <TabStrip />
          <AddressBar />
          <Bookmarks />
          <Toolbar />
          <div className="flex grow bg-[#ededed]">
            <div className="flex w-[1872px] flex-col pt-[88px]">
              <div className="pl-[428px]"><Canvas /></div>
              <div className="mb-[16px] mr-[2px] mt-auto self-end"><Status /></div>
            </div>
            <div className="w-[6px]"><i className="block h-[591px] rounded-full bg-[#c4c4c4]" /></div>
          </div>
        </main>
      </div>
      <Taskbar />
    </div>
  );
}
